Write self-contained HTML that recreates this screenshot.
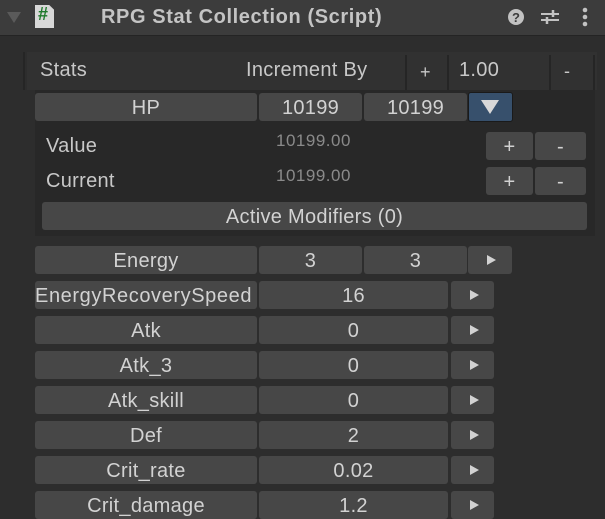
<!DOCTYPE html><html><head><style>
*{margin:0;padding:0;box-sizing:border-box}
body{width:605px;height:510px;overflow:hidden;background:#2d2d2d;font-family:"Liberation Sans",sans-serif;color:#c8c8c8;position:relative}
.a{position:absolute}
.b{position:absolute;background:#474747;border-radius:3px;text-align:center;font-size:20px;letter-spacing:0.3px;line-height:30px;height:28px;color:#d2d2d2;overflow:hidden;white-space:nowrap}
.sep{position:absolute;width:2px;background:#252525}
.t{position:absolute;left:50%;top:50%;margin:-5px 0 0 -3px;width:0;height:0;border-left:9px solid #d2d2d2;border-top:5px solid transparent;border-bottom:5px solid transparent}
.lab{position:absolute;font-size:20px;letter-spacing:0.3px}
</style></head><body>
<div class="a" style="left:0;top:0;width:605px;height:36px;background:#3c3c3c;border-bottom:1px solid #242424"></div>
<svg class="a" style="left:6px;top:10px" width="16" height="14"><polygon points="1,2 15,2 8,13" fill="#5a5a5a"/></svg>
<div class="a" style="left:35px;top:5px;width:19px;height:23px;background:#d8d8d8;clip-path:polygon(0 0,75% 0,100% 20%,100% 100%,0 100%)"></div>
<div class="a" style="left:38px;top:4px;font-size:18px;font-weight:bold;color:#1f7a2c">#</div>
<div class="a" style="left:101px;top:6px;font-size:20px;letter-spacing:0.6px;font-weight:bold;color:#c4c4c4">RPG Stat Collection (Script)</div>
<svg class="a" style="left:506px;top:7px" width="20" height="20"><circle cx="10" cy="10" r="8" fill="#c2c2c2"/><text x="10" y="15" font-size="13" font-weight="bold" text-anchor="middle" fill="#3c3c3c" font-family="Liberation Sans">?</text></svg>
<svg class="a" style="left:540px;top:8px" width="20" height="18"><path d="M1 6H19M1 12H19" stroke="#c2c2c2" stroke-width="2"/><path d="M13 2V9M7 9V16" stroke="#c2c2c2" stroke-width="2.5"/></svg>
<svg class="a" style="left:580px;top:7px" width="10" height="20"><circle cx="5" cy="3" r="2.3" fill="#c2c2c2"/><circle cx="5" cy="10" r="2.3" fill="#c2c2c2"/><circle cx="5" cy="17" r="2.3" fill="#c2c2c2"/></svg>

<div class="a" style="left:27px;top:52px;width:570px;height:38px;background:#313131"></div>
<div class="sep" style="left:23px;top:52px;height:38px"></div>
<div class="sep" style="left:405px;top:55px;height:35px"></div>
<div class="sep" style="left:447px;top:55px;height:35px"></div>
<div class="sep" style="left:549px;top:55px;height:35px"></div>
<div class="sep" style="left:593px;top:55px;height:35px"></div>
<div class="lab" style="left:40px;top:59px">Stats</div>
<div class="lab" style="left:246px;top:59px">Increment By</div>
<div class="a" style="left:420px;top:62px;font-size:18px">+</div>
<div class="lab" style="left:459px;top:59px">1.00</div>
<div class="a" style="left:564px;top:61px;font-size:18px">-</div>

<div class="a" style="left:35px;top:90px;width:560px;height:146px;background:#282828"></div>
<div class="b" style="left:35px;top:93px;width:222px">HP</div>
<div class="b" style="left:259px;top:93px;width:103px">10199</div>
<div class="b" style="left:364px;top:93px;width:103px">10199</div>
<div class="b" style="left:468px;top:92px;width:45px;height:30px;background:#37506c;border:1px solid #1a1a1a"></div>
<svg class="a" style="left:480px;top:99px" width="20" height="16"><polygon points="1,1 19,1 10,15" fill="#d8d8d8"/></svg>

<div class="lab" style="left:46px;top:135px">Value</div>
<div class="a" style="left:276px;top:131px;font-size:17px;letter-spacing:0.5px;color:#8a8a8a">10199.00</div>
<div class="b" style="left:486px;top:132px;width:47px">+</div>
<div class="b" style="left:535px;top:132px;width:51px">-</div>
<div class="lab" style="left:46px;top:170px">Current</div>
<div class="a" style="left:276px;top:166px;font-size:17px;letter-spacing:0.5px;color:#8a8a8a">10199.00</div>
<div class="b" style="left:486px;top:167px;width:47px">+</div>
<div class="b" style="left:535px;top:167px;width:51px">-</div>
<div class="b" style="left:42px;top:202px;width:545px">Active Modifiers (0)</div>

<div class="b" style="left:35px;top:246px;width:222px">Energy</div>
<div class="b" style="left:259px;top:246px;width:103px">3</div>
<div class="b" style="left:364px;top:246px;width:103px">3</div>
<div class="b" style="left:468px;top:246px;width:44px"><i class="t"></i></div>

<div class="b" style="left:35px;top:281px;width:222px;text-align:left;letter-spacing:0.6px">EnergyRecoverySpeed</div>
<div class="b" style="left:259px;top:281px;width:189px">16</div>
<div class="b" style="left:451px;top:281px;width:43px"><i class="t"></i></div>

<div class="b" style="left:35px;top:316px;width:222px">Atk</div><div class="b" style="left:259px;top:316px;width:189px">0</div><div class="b" style="left:451px;top:316px;width:43px"><i class="t"></i></div>
<div class="b" style="left:35px;top:351px;width:222px">Atk_3</div><div class="b" style="left:259px;top:351px;width:189px">0</div><div class="b" style="left:451px;top:351px;width:43px"><i class="t"></i></div>
<div class="b" style="left:35px;top:386px;width:222px">Atk_skill</div><div class="b" style="left:259px;top:386px;width:189px">0</div><div class="b" style="left:451px;top:386px;width:43px"><i class="t"></i></div>
<div class="b" style="left:35px;top:421px;width:222px">Def</div><div class="b" style="left:259px;top:421px;width:189px">2</div><div class="b" style="left:451px;top:421px;width:43px"><i class="t"></i></div>
<div class="b" style="left:35px;top:456px;width:222px">Crit_rate</div><div class="b" style="left:259px;top:456px;width:189px">0.02</div><div class="b" style="left:451px;top:456px;width:43px"><i class="t"></i></div>
<div class="b" style="left:35px;top:491px;width:222px">Crit_damage</div><div class="b" style="left:259px;top:491px;width:189px">1.2</div><div class="b" style="left:451px;top:491px;width:43px"><i class="t"></i></div>
</body></html>
